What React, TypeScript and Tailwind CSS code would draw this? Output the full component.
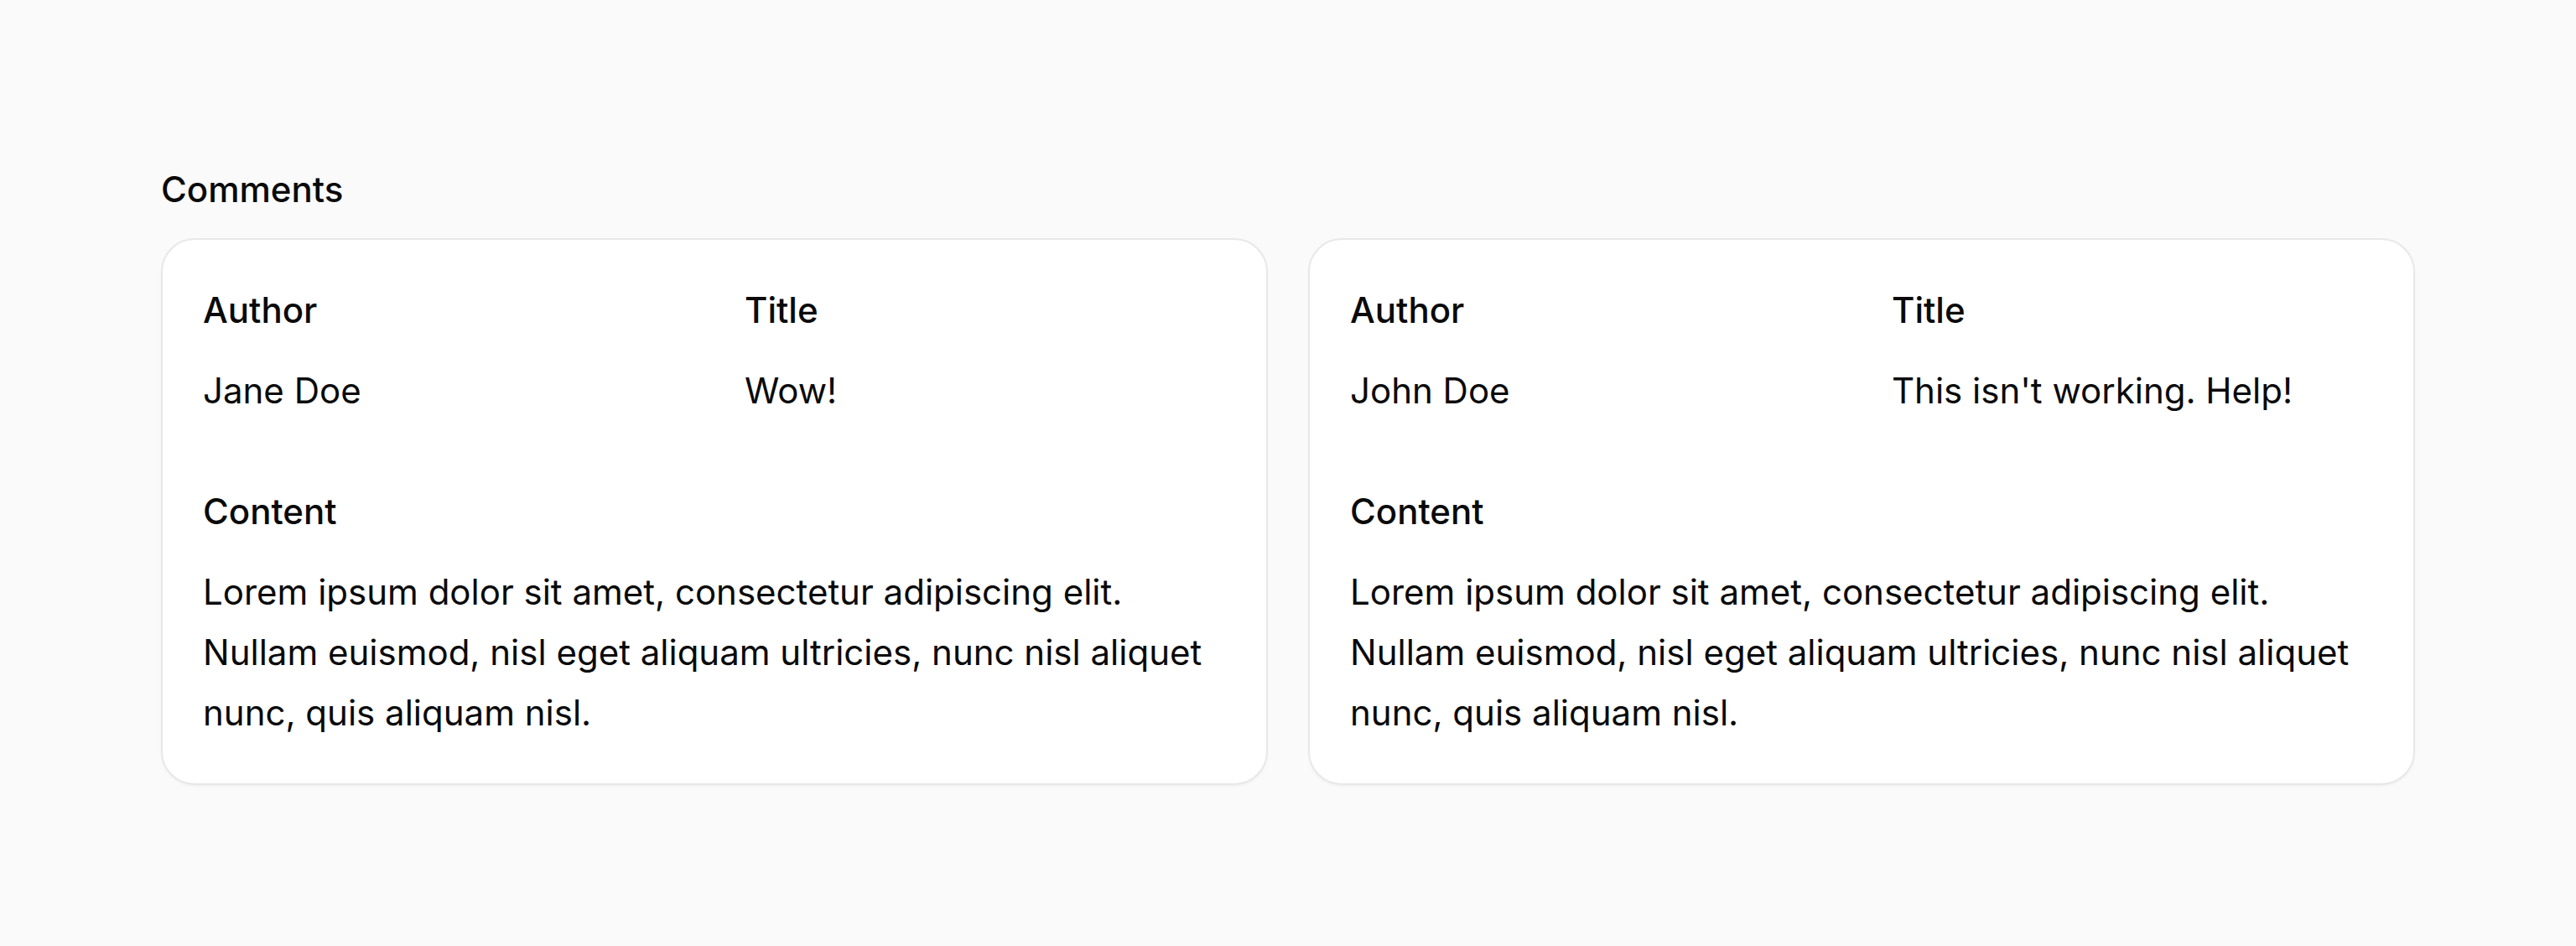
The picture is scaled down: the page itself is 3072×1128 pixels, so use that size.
type Comment = {
  author: string;
  title: string;
  content: string;
};

const comments: Comment[] = [
  {
    author: "Jane Doe",
    title: "Wow!",
    content:
      "Lorem ipsum dolor sit amet, consectetur adipiscing elit. Nullam euismod, nisl eget aliquam ultricies, nunc nisl aliquet nunc, quis aliquam nisl.",
  },
  {
    author: "John Doe",
    title: "This isn't working. Help!",
    content:
      "Lorem ipsum dolor sit amet, consectetur adipiscing elit. Nullam euismod, nisl eget aliquam ultricies, nunc nisl aliquet nunc, quis aliquam nisl.",
  },
];

function Field({ label, value, wide }: { label: string; value: string; wide?: boolean }) {
  return (
    <div className={wide ? "col-span-2" : ""}>
      <dt className="font-medium">{label}</dt>
      <dd className="mt-[24px]">{value}</dd>
    </div>
  );
}

function CommentCard({ comment }: { comment: Comment }) {
  return (
    <div className="bg-white rounded-[40px] border-2 border-[#e8e8e8] shadow-[0_2px_3px_rgba(0,0,0,0.04)] p-[48px]">
      <dl className="grid grid-cols-2 gap-[72px]">
        <Field label="Author" value={comment.author} />
        <Field label="Title" value={comment.title} />
        <Field label="Content" value={comment.content} wide />
      </dl>
    </div>
  );
}

export default function App() {
  return (
    <div className="min-h-screen bg-[#fafafa] px-[192px] py-[190px] text-[42px] leading-[72px] text-[#0a0a0a] font-['Inter',sans-serif]">
      <h2 className="font-medium mb-[22px]">Comments</h2>
      <div className="grid grid-cols-2 gap-[48px]">
        {comments.map((c) => (
          <CommentCard key={c.author} comment={c} />
        ))}
      </div>
    </div>
  );
}
